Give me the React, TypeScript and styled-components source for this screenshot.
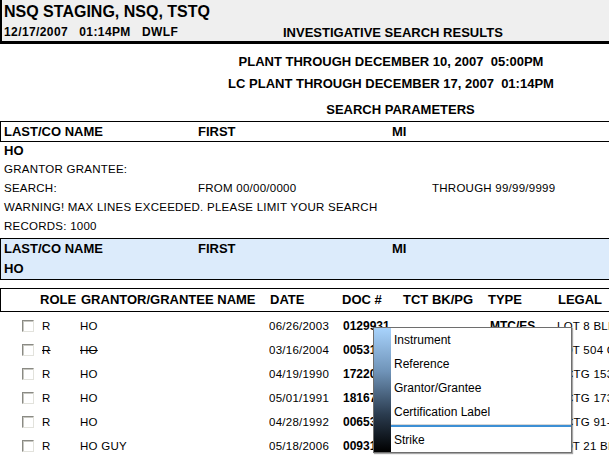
import React from "react";
import styled, { createGlobalStyle } from "styled-components";

const GlobalStyle = createGlobalStyle`
  html, body {
    margin: 0;
    padding: 0;
    background: #fff;
    overflow: hidden;
  }
  body {
    font-family: "Liberation Sans", Arial, sans-serif;
    color: #000;
  }
`;

const Page = styled.div`
  position: relative;
  width: 640px;
  height: 457px;
  overflow: hidden;
`;

const Banner = styled.header`
  height: 41px;
  padding-left: 2px;
  background: #efefef;
  border-left: 2px solid #000;
  border-bottom: 3px solid #000;
`;

const BannerTitle = styled.div`
  font-size: 16px;
  font-weight: bold;
  line-height: 24px;
`;

const BannerLine = styled.div`
  display: flex;
  font-size: 12px;
  font-weight: bold;
  line-height: 17px;
  white-space: pre;
`;

const BannerMeta = styled.span`
  width: 279px;
  letter-spacing: 0.4px;
`;

const BannerHeading = styled.span`
  font-size: 13px;
`;

const Notice = styled.div<{ $width: number; $top: number }>`
  width: ${(p) => p.$width}px;
  margin-top: ${(p) => p.$top}px;
  text-align: center;
  font-size: 13px;
  font-weight: bold;
  line-height: 22px;
  white-space: pre;
`;

const FieldRow = styled.div<{ $cols: string; $height: number; $bold?: boolean }>`
  display: grid;
  grid-template-columns: ${(p) => p.$cols};
  padding-left: 4px;
  line-height: ${(p) => p.$height}px;
  font-size: ${(p) => (p.$bold ? 13 : 11.5)}px;
  font-weight: ${(p) => (p.$bold ? "bold" : "normal")};
  letter-spacing: ${(p) => (p.$bold ? 0 : 0.25)}px;
  white-space: nowrap;
`;

const ParamHead = styled.div`
  border-top: 1px solid #000;
  border-bottom: 1px solid #000;
  border-left: 1px solid #000;
  & > ${FieldRow} {
    padding-left: 3px;
  }
`;

const ParamBody = styled.div`
  padding-bottom: 2px;
`;

const SelectedName = styled.div`
  background: #dcebfb;
  border-top: 1px solid #000;
  border-bottom: 1px solid #000;
  border-left: 1px solid #000;
  & > ${FieldRow} {
    padding-left: 3px;
  }
`;

const COLS = "39px 41px 189px 72px 61px 85px 70px 120px";

const TableHead = styled.div`
  display: grid;
  grid-template-columns: ${COLS};
  margin-top: 8px;
  border-top: 1px solid #000;
  border-bottom: 1px solid #000;
  border-left: 1px solid #000;
  font-size: 13px;
  font-weight: bold;
  line-height: 22px;
  white-space: nowrap;
`;

const HeadCell = styled.span``;

const TableBody = styled.div`
  padding-top: 2px;
`;

const Row = styled.div`
  display: grid;
  grid-template-columns: ${COLS};
  align-items: center;
  height: 24px;
  white-space: nowrap;
  overflow: hidden;
`;

const Cell = styled.span<{ $pad?: number; $strong?: boolean; $struck?: boolean }>`
  padding-left: ${(p) => p.$pad ?? 0}px;
  font-size: ${(p) => (p.$strong ? 12 : 11.5)}px;
  font-weight: ${(p) => (p.$strong ? "bold" : "normal")};
  letter-spacing: ${(p) => (p.$strong ? 0 : 0.25)}px;
  text-decoration: ${(p) => (p.$struck ? "line-through" : "none")};
  overflow: hidden;
`;

const CheckCell = styled.span`
  display: flex;
  padding-left: 22px;
`;

const Check = styled.span`
  box-sizing: border-box;
  width: 12px;
  height: 12px;
  background: #fff;
  border-top: 1px solid #8a8a84;
  border-left: 1px solid #8a8a84;
  border-right: 1px solid #e2e2dc;
  border-bottom: 1px solid #e2e2dc;
  box-shadow: inset 1px 1px 0 #c8c8c2;
`;

const Menu = styled.div`
  position: absolute;
  left: 373px;
  top: 327px;
  box-sizing: border-box;
  width: 199px;
  height: 126px;
  display: flex;
  background: #fff;
  border: 1px solid #6e6e6e;
  box-shadow: 1px 1px 1px rgba(0, 0, 0, 0.35);
`;

const MenuRail = styled.div`
  width: 17px;
  flex: none;
  background: linear-gradient(#a8d3fc 0%, #6f93b8 35%, #2a3b4e 70%, #000 100%);
`;

const MenuList = styled.div`
  flex: 1;
  display: flex;
  flex-direction: column;
`;

const MenuItem = styled.div`
  padding-left: 3px;
  font-size: 12px;
  line-height: 24px;
  color: #000;
`;

const MenuSeparator = styled.div`
  height: 1px;
  background: #d6d6d6;
  border-bottom: 2px solid #3d8fd4;
  margin-bottom: 1px;
`;

type Record = {
  name: string;
  date: string;
  doc: string;
  type: string;
  legal: string;
  struck?: boolean;
};

const records: Record[] = [
  { name: "HO", date: "06/26/2003", doc: "0129931", type: "MTC/ES", legal: "LOT 8 BLK 4" },
  { name: "HO", date: "03/16/2004", doc: "0053118", type: "DEED", legal: "LOT 504 C", struck: true },
  { name: "HO", date: "04/19/1990", doc: "1722046", type: "MTG", legal: "PCTG 1539" },
  { name: "HO", date: "05/01/1991", doc: "1816721", type: "MTG", legal: "PCTG 1737" },
  { name: "HO", date: "04/28/1992", doc: "0065317", type: "MTG", legal: "PCTG 91-0" },
  { name: "HO GUY", date: "05/18/2006", doc: "0093152", type: "DEED", legal: "LOT 21 BLK" },
];

const menuItems = ["Instrument", "Reference", "Grantor/Grantee", "Certification Label"];

const NAME_COLS = "194px 194px 1fr";
const RANGE_COLS = "194px 234px 1fr";

export default function App() {
  return (
    <Page>
      <GlobalStyle />
      <Banner>
        <BannerTitle>NSQ STAGING, NSQ, TSTQ</BannerTitle>
        <BannerLine>
          <BannerMeta>{"12/17/2007   01:14PM   DWLF"}</BannerMeta>
          <BannerHeading>INVESTIGATIVE SEARCH RESULTS</BannerHeading>
        </BannerLine>
      </Banner>

      <Notice $width={782} $top={7}>{"PLANT THROUGH DECEMBER 10, 2007  05:00PM"}</Notice>
      <Notice $width={782} $top={0}>{"LC PLANT THROUGH DECEMBER 17, 2007  01:14PM"}</Notice>
      <Notice $width={801} $top={4}>SEARCH PARAMETERS</Notice>

      <ParamHead>
        <FieldRow $cols={NAME_COLS} $height={19} $bold>
          <span>LAST/CO NAME</span>
          <span>FIRST</span>
          <span>MI</span>
        </FieldRow>
      </ParamHead>
      <ParamBody>
        <FieldRow $cols="1fr" $height={18} $bold>
          <span>HO</span>
        </FieldRow>
        <FieldRow $cols="1fr" $height={19}>
          <span>GRANTOR GRANTEE:</span>
        </FieldRow>
        <FieldRow $cols={RANGE_COLS} $height={19}>
          <span>SEARCH:</span>
          <span>FROM 00/00/0000</span>
          <span>THROUGH 99/99/9999</span>
        </FieldRow>
        <FieldRow $cols="1fr" $height={19}>
          <span>WARNING! MAX LINES EXCEEDED. PLEASE LIMIT YOUR SEARCH</span>
        </FieldRow>
        <FieldRow $cols="1fr" $height={19}>
          <span>RECORDS: 1000</span>
        </FieldRow>
      </ParamBody>

      <SelectedName>
        <FieldRow $cols={NAME_COLS} $height={20} $bold>
          <span>LAST/CO NAME</span>
          <span>FIRST</span>
          <span>MI</span>
        </FieldRow>
        <FieldRow $cols="1fr" $height={20} $bold>
          <span>HO</span>
        </FieldRow>
      </SelectedName>

      <TableHead>
        <HeadCell />
        <HeadCell>ROLE</HeadCell>
        <HeadCell>GRANTOR/GRANTEE NAME</HeadCell>
        <HeadCell>DATE</HeadCell>
        <HeadCell>DOC #</HeadCell>
        <HeadCell>TCT BK/PG</HeadCell>
        <HeadCell>TYPE</HeadCell>
        <HeadCell>LEGAL</HeadCell>
      </TableHead>

      <TableBody>
        {records.map((r, i) => (
          <Row key={i}>
            <CheckCell>
              <Check />
            </CheckCell>
            <Cell $pad={3} $struck={r.struck}>R</Cell>
            <Cell $struck={r.struck}>{r.name}</Cell>
            <Cell>{r.date}</Cell>
            <Cell $pad={2} $strong>{r.doc}</Cell>
            <Cell />
            <Cell $pad={3} $strong>{r.type}</Cell>
            <Cell>{r.legal}</Cell>
          </Row>
        ))}
      </TableBody>

      <Menu>
        <MenuRail />
        <MenuList>
          {menuItems.map((m) => (
            <MenuItem key={m}>{m}</MenuItem>
          ))}
          <MenuSeparator />
          <MenuItem>Strike</MenuItem>
        </MenuList>
      </Menu>
    </Page>
  );
}
